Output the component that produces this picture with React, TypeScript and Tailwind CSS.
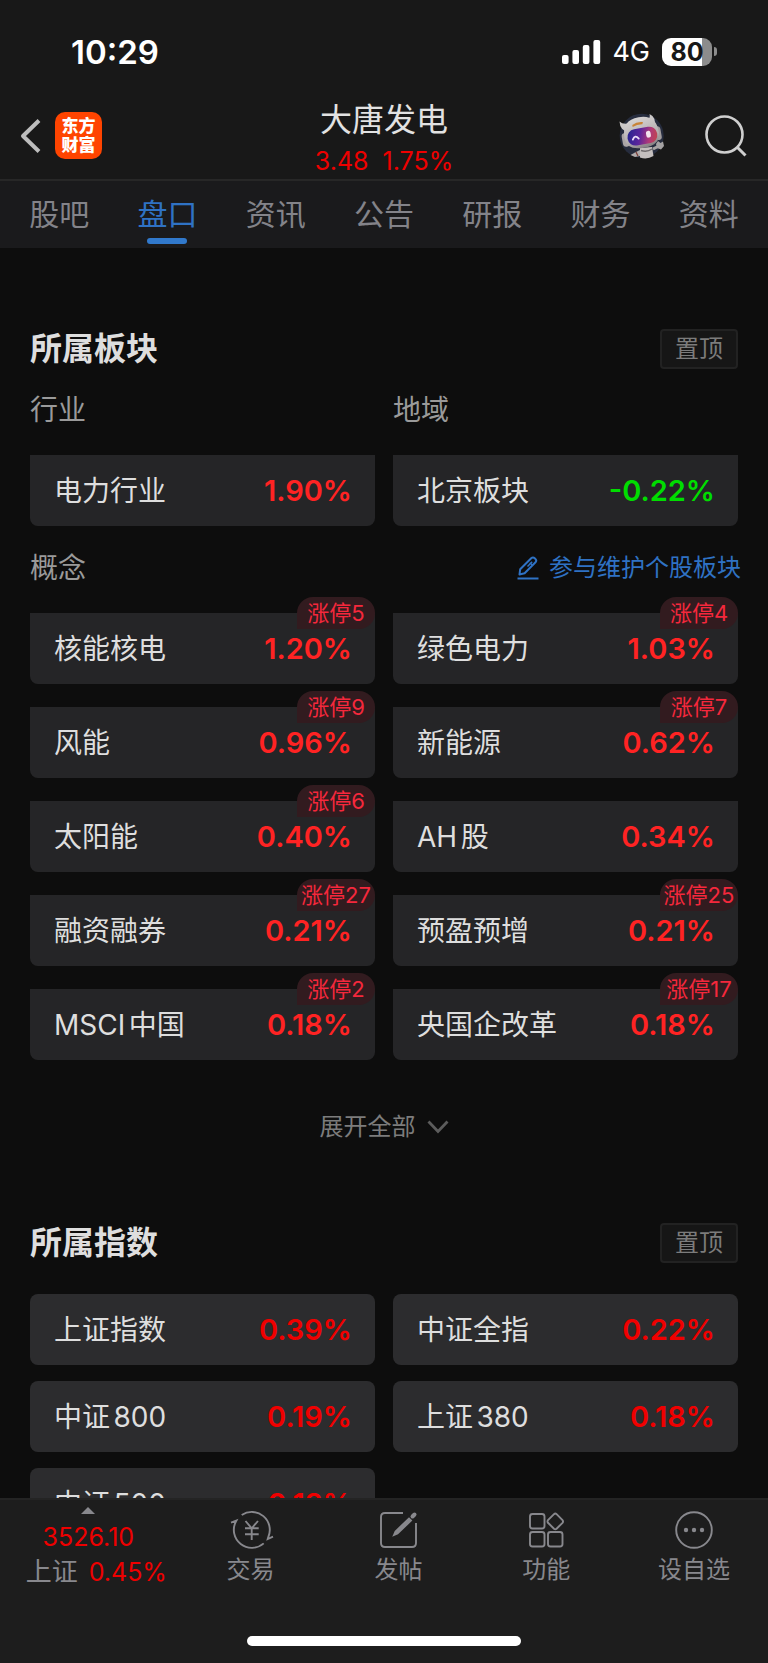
import React, { useState } from "react";
import clsx from "clsx";

interface Board {
  name: string;
  change: string;
  limitUp?: number;
}

const tabs = ["股吧", "盘口", "资讯", "公告", "研报", "财务", "资料"];

const concepts: Board[] = [
  { name: "核能核电", change: "1.20%", limitUp: 5 },
  { name: "绿色电力", change: "1.03%", limitUp: 4 },
  { name: "风能", change: "0.96%", limitUp: 9 },
  { name: "新能源", change: "0.62%", limitUp: 7 },
  { name: "太阳能", change: "0.40%", limitUp: 6 },
  { name: "AH股", change: "0.34%" },
  { name: "融资融券", change: "0.21%", limitUp: 27 },
  { name: "预盈预增", change: "0.21%", limitUp: 25 },
  { name: "MSCI中国", change: "0.18%", limitUp: 2 },
  { name: "央国企改革", change: "0.18%", limitUp: 17 },
];

const indexes: Board[] = [
  { name: "上证指数", change: "0.39%" },
  { name: "中证全指", change: "0.22%" },
  { name: "中证800", change: "0.19%" },
  { name: "上证380", change: "0.18%" },
  { name: "中证500", change: "0.12%" },
];

function StatusBar() {
  return (
    <div className="flex h-24 items-center justify-between pt-[7px] pr-[51px] pl-[71px] text-white">
      <span className="text-[33px] leading-10 font-semibold">10:29</span>
      <div className="flex items-center">
        <svg width="39" height="24" viewBox="0 0 39 24" fill="currentColor">
          <rect x="0" y="15" width="6.6" height="9" rx="2" />
          <rect x="10.4" y="10" width="6.6" height="14" rx="2" />
          <rect x="20.8" y="5" width="6.6" height="19" rx="2" />
          <rect x="31.4" y="0" width="6.8" height="24" rx="2" />
        </svg>
        <span className="ml-[11px] text-[27px] leading-8">4G</span>
        <div className="ml-3 flex items-center gap-[2px]">
          <div className="flex h-7 w-[50px] items-center justify-center rounded-[9px] bg-linear-to-r from-white from-80% to-[#8c8c8c] to-80% text-[25px] leading-7 font-bold text-[#181818]">
            80
          </div>
          <div className="h-[9px] w-[3px] rounded-r-full bg-[#8c8c8c]" />
        </div>
      </div>
    </div>
  );
}

function Robot() {
  return (
    <svg width="48" height="48" viewBox="0 0 48 48">
      <defs>
        <linearGradient id="visor" x1="0" y1="0.4" x2="1" y2="0.6">
          <stop offset="0" stopColor="#2a2590" />
          <stop offset="0.4" stopColor="#5a259c" />
          <stop offset="0.75" stopColor="#b03a78" />
          <stop offset="1" stopColor="#c04450" />
        </linearGradient>
        <linearGradient id="shell" x1="0.4" y1="0" x2="0.6" y2="1">
          <stop offset="0" stopColor="#d6d3d2" />
          <stop offset="0.7" stopColor="#b0abac" />
          <stop offset="1" stopColor="#858082" />
        </linearGradient>
      </defs>
      <circle cx="23.7" cy="23.7" r="22" fill="#262c3d" />
      <path d="M22 36 L34 35 L35.5 44 Q29 48 22 45.5 Z" fill="#c4bfbe" />
      <path d="M23 38.5 Q29 40.5 34 37" stroke="#6f6a6c" strokeWidth="1.4" fill="none" />
      <path d="M22 38 L17 40.5 L12.5 43 L17 45 L22 44 Z" fill="#b0abab" />
      <path d="M18 40 l2 4" stroke="#7a3c35" strokeWidth="1.2" />
      <path d="M35 37 L40 34.5" stroke="#a9a4a4" strokeWidth="3" />
      <path d="M38 32 L40 29 L42.5 31 L45 29.5 L46 34 L43 37.5 L39 36 Z" fill="#a5a2a3" />
      <path d="M11 20 Q2 19 1.5 9.5 Q5 13 12 11 Z" fill="#cbc8c7" />
      <path d="M28 8 Q33 7 31.5 2 Q38.5 5 36.5 15 Z" fill="#cbc8c7" />
      <g transform="rotate(-10 23.5 22)">
        <rect x="3.5" y="18" width="7" height="14" rx="3.5" fill="#aaa5a6" />
        <rect x="37" y="17" width="6" height="14" rx="3" fill="#a09b9c" />
        <path d="M6 23 Q6 5 23.5 5 Q41 5 41 23 Q41 36 23.5 36 Q6 36 6 23 Z" fill="url(#shell)" />
        <rect x="9" y="16" width="30" height="16.5" rx="8" fill="url(#visor)" />
        <path d="M16 11.5 Q21 8.8 27 10.5 L26 12.5 Q21 11.5 16 13.5 Z" fill="#c98336" />
        <path d="M14 26 Q17 21 20 26" stroke="#e9dcf8" strokeWidth="1.8" fill="none" strokeLinecap="round" />
        <rect x="28" y="20" width="4.6" height="6.8" rx="2" fill="#f3e4ee" />
      </g>
    </svg>
  );
}

function Header() {
  return (
    <header className="grid h-[85px] grid-cols-3 border-b-2 border-[#272727]">
      <div className="flex items-center gap-[13px] pb-2 pl-5">
        <button type="button" aria-label="返回" className="text-[#bdbdbd]">
          <svg width="22" height="36" viewBox="0 0 22 36" fill="none" stroke="currentColor" strokeWidth="4" strokeLinejoin="round">
            <path d="M19 2.5 L3 18 L19 33.5" />
          </svg>
        </button>
        <a
          href="#home"
          className="flex size-[47px] flex-col items-center justify-center rounded-[10px] bg-[#ff4400] text-[17px] leading-[19px] font-black text-white"
        >
          <span>东方</span>
          <span>财富</span>
        </a>
      </div>
      <div className="flex flex-col items-center pt-[5px]">
        <h1 className="text-[32px] leading-[38px] text-[#e2e2e2]">大唐发电</h1>
        <p className="flex gap-[14px] text-[25px] leading-[44px] text-[#ee0000]">
          <span>3.48</span>
          <span>1.75%</span>
        </p>
      </div>
      <div className="flex items-center justify-end gap-[39px] pr-[21px] pb-2">
        <button type="button" aria-label="智能助手">
          <Robot />
        </button>
        <button type="button" aria-label="搜索" className="text-[#cfcfcf]">
          <svg width="42" height="42" viewBox="0 0 42 42" fill="none" stroke="currentColor" strokeWidth="2.6">
            <circle cx="19.5" cy="19.5" r="18" />
            <path d="M32 32 L40.5 40.5" strokeWidth="3" />
          </svg>
        </button>
      </div>
    </header>
  );
}

function SectionTitle({ title }: { title: string }) {
  return (
    <div className="flex h-10 items-center justify-between">
      <h2 className="text-[32px] leading-10 font-bold text-[#dedede]">{title}</h2>
      <button
        type="button"
        className="h-10 w-[78px] rounded-[4px] border-2 border-[#222222] bg-[#161616] text-2xl leading-8 text-[#7c7c7c]"
      >
        置顶
      </button>
    </div>
  );
}

function BoardCard({ board, solid }: { board: Board; solid?: boolean }) {
  const falling = board.change.startsWith("-");

  return (
    <a
      href={`#${board.name}`}
      className={clsx(
        "relative flex h-[71px] items-center justify-between pr-[23px] pl-6 leading-10",
        solid ? "rounded-lg bg-[#2c2c2e]" : "rounded-b-lg bg-[#252527]"
      )}
    >
      <span className="text-[28px] text-[#dedede] [text-autospace:normal]">{board.name}</span>
      <span
        className={clsx(
          "text-[29px] font-semibold",
          falling ? "text-[#00dd00]" : solid ? "text-[#f00000]" : "text-[#ff2323]"
        )}
      >
        {board.change}
      </span>
      {board.limitUp && (
        <span className="absolute -top-4 right-0 flex h-8 min-w-[78px] items-center justify-center rounded-t-2xl rounded-br-2xl bg-[#321b1f] text-[22px] text-[#f5283c]">
          涨停{board.limitUp}
        </span>
      )}
    </a>
  );
}

const actions = [
  {
    label: "交易",
    icon: (
      <>
        <path d="M10.7 5 A18 18 0 0 1 37.2 27.3 L36.7 29 L42 26.7" />
        <path d="M32.7 33.4 A18 18 0 0 1 4.9 11.5 L5.4 10.6 L0 12.7" />
        <path d="M14.5 11 L20.7 18.3 L27 11 M14 18.3 H27.7 M14 24.3 H27.7 M20.7 18.3 V30" />
      </>
    ),
  },
  {
    label: "发帖",
    icon: (
      <>
        <path d="M25 3 H7 Q3 3 3 7 V33 Q3 37 7 37 H34 Q38 37 38 33 V13" />
        <path d="M16 25 L17.5 21.5 L31 8.5 L33 10.5 L19.5 23.5 Z" fill="currentColor" />
        <path d="M34.5 6.5 L36.5 4.5" strokeWidth="4" strokeLinecap="round" />
      </>
    ),
  },
  {
    label: "功能",
    icon: (
      <>
        <rect x="4" y="4" width="14.5" height="14.5" rx="2.5" />
        <rect x="4" y="22" width="14.5" height="14.5" rx="2.5" />
        <rect x="22" y="22" width="14.5" height="14.5" rx="2.5" />
        <path d="M28 4.2 Q29.3 3 30.6 4.2 L36.5 10.2 Q37.6 11.5 36.5 12.8 L30.6 18.7 Q29.3 19.8 28 18.7 L22 12.8 Q21 11.5 22 10.2 Z" />
      </>
    ),
  },
  {
    label: "设自选",
    icon: (
      <>
        <circle cx="20" cy="20" r="17.8" />
        <g fill="currentColor" stroke="none">
          <circle cx="12" cy="20" r="2.2" />
          <circle cx="20" cy="20" r="2.2" />
          <circle cx="28" cy="20" r="2.2" />
        </g>
      </>
    ),
  },
];

function BottomBar() {
  return (
    <footer className="h-[165px] shrink-0 border-t-2 border-[#242424] bg-[#1d1d1d] text-[#88888d]">
      <div className="flex h-[136px]">
        <a href="#sse" className="flex w-[23%] flex-col items-center pt-[7px]">
          <svg width="14" height="7" viewBox="0 0 14 7" fill="currentColor">
            <path d="M7 0 L14 7 H0 Z" />
          </svg>
          <span className="mt-[6px] text-[25px] leading-[34px] text-[#ee0000]">3526.10</span>
          <span className="flex gap-[11px] pl-4 leading-9">
            <span className="text-[26px]">上证</span>
            <span className="text-[25px] text-[#ee0000]">0.45%</span>
          </span>
        </a>
        {actions.map((action) => (
          <button key={action.label} type="button" className="flex flex-1 flex-col items-center pt-[10px]">
            <svg width="40" height="40" viewBox="0 0 40 40" fill="none" stroke="currentColor" strokeWidth="1.9" className="overflow-visible">
              {action.icon}
            </svg>
            <span className="text-2xl leading-10">{action.label}</span>
          </button>
        ))}
      </div>
      <div className="mx-auto h-[10px] w-[274px] rounded-full bg-white" />
    </footer>
  );
}

export default function App() {
  const [activeTab, setActiveTab] = useState("盘口");

  return (
    <div className="flex h-screen flex-col bg-[#0d0d0d] font-['Inter','Noto_Sans_CJK_SC',sans-serif]">
      <div className="shrink-0 bg-[#181818]">
        <StatusBar />
        <Header />
        <nav className="flex h-[67px] bg-[#1a1a1c] px-[5px]">
          {tabs.map((tab) => (
            <button
              key={tab}
              type="button"
              onClick={() => setActiveTab(tab)}
              className={clsx(
                "relative flex flex-1 justify-center pt-[11px] text-[30px] leading-[44px]",
                tab === activeTab ? "text-[#2f72c4]" : "text-[#838389]"
              )}
            >
              {tab}
              {tab === activeTab && (
                <span className="absolute bottom-1 h-[6px] w-10 rounded-full bg-[#3179cc]" />
              )}
            </button>
          ))}
        </nav>
      </div>

      <main className="min-h-0 flex-1 overflow-y-auto px-[30px] [scrollbar-width:none]">
        {/* Boards */}
        <section className="pt-[81px]">
          <SectionTitle title="所属板块" />
          <div className="grid grid-cols-2 gap-x-[18px]">
            <h3 className="flex h-[86px] items-center pb-1 text-[28px] text-[#9a9a9a]">行业</h3>
            <h3 className="flex h-[86px] items-center pb-1 text-[28px] text-[#9a9a9a]">地域</h3>
            <BoardCard board={{ name: "电力行业", change: "1.90%" }} />
            <BoardCard board={{ name: "北京板块", change: "-0.22%" }} />
          </div>
          <div className="-mr-[3px] flex h-[87px] items-center justify-between pb-1">
            <h3 className="text-[28px] text-[#9a9a9a]">概念</h3>
            <a href="#edit" className="flex items-center gap-[10px] text-2xl text-[#2f72c4]">
              <svg width="22" height="24" viewBox="0 0 22 24" fill="none" stroke="currentColor" strokeWidth="2" strokeLinejoin="round">
                <path d="M2.5 18.5 L3.2 13.2 L14.2 2.2 Q16 0.6 18 2.4 Q20.2 4.4 18.5 6.3 L7.6 17.2 Z" />
                <path d="M12.8 6.8 L15.5 9.3 M15.2 5.8 L10.5 10.5" strokeWidth="1.5" />
                <path d="M0.5 22.5 H21.5" />
              </svg>
              参与维护个股板块
            </a>
          </div>
          <div className="grid grid-cols-2 gap-x-[18px] gap-y-[23px]">
            {concepts.map((board) => (
              <BoardCard key={board.name} board={board} />
            ))}
          </div>
          <button type="button" className="mx-auto mt-[49px] flex h-9 items-center gap-[11px] text-2xl text-[#7c7c7c]">
            展开全部
            <svg width="22" height="14" viewBox="0 0 22 14" fill="none" stroke="#5c5c5c" strokeWidth="2.8">
              <path d="M1.5 1.5 L11 11.5 L20.5 1.5" />
            </svg>
          </button>
        </section>

        {/* Indexes */}
        <section className="pt-[78px]">
          <SectionTitle title="所属指数" />
          <div className="mt-[31px] grid grid-cols-2 gap-x-[18px] gap-y-4">
            {indexes.map((board) => (
              <BoardCard key={board.name} board={board} solid />
            ))}
          </div>
        </section>
      </main>

      <BottomBar />
    </div>
  );
}
